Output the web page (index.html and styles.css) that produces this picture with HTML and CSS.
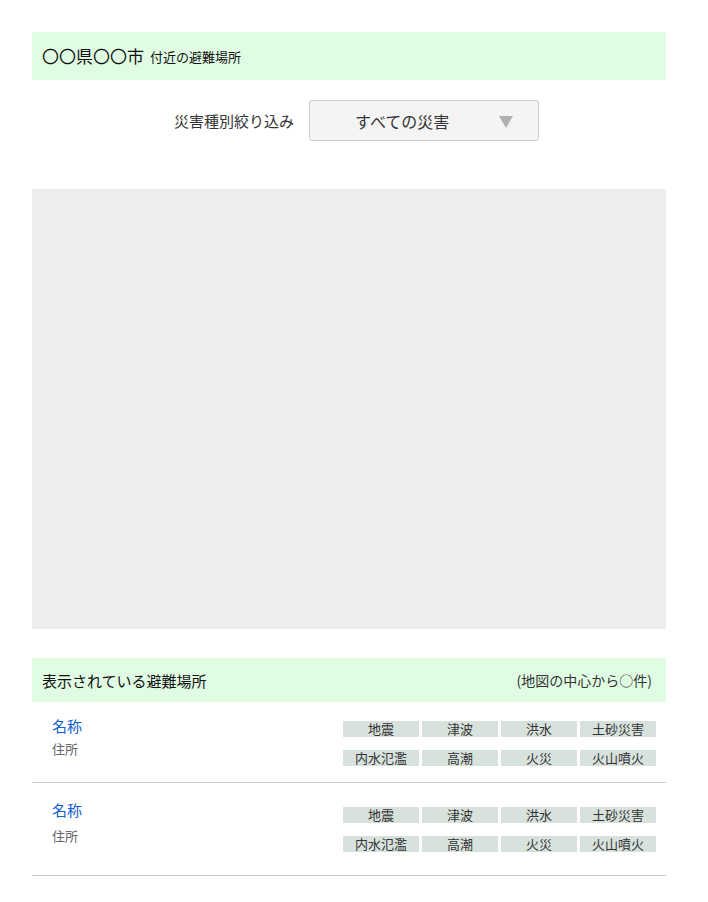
FILE: index.html
```html
<!DOCTYPE html>
<html lang="ja">
<head>
<meta charset="utf-8">
<title>避難場所</title>
<link rel="stylesheet" href="styles.css">
</head>
<body>
<div class="page">
  <div class="title-bar">
    <span class="title-main">〇〇県〇〇市</span>
    <span class="title-sub">付近の避難場所</span>
  </div>

  <div class="filter">
    <span class="filter-label">災害種別絞り込み</span>
    <div class="select">
      <span class="select-text">すべての災害</span>
      <svg class="select-arrow" width="14" height="12" viewBox="0 0 14 12"><polygon points="0,0 14,0 7,12" fill="#b0b0b0"/></svg>
    </div>
  </div>

  <div class="map"></div>

  <div class="list-header">
    <span class="list-title">表示されている避難場所</span>
    <span class="list-count">(地図の中心から○件)</span>
  </div>

  <div class="item item-first">
    <div class="item-info">
      <div class="item-name">名称</div>
      <div class="item-addr">住所</div>
    </div>
    <div class="tags">
      <span class="tag">地震</span><span class="tag">津波</span><span class="tag">洪水</span><span class="tag">土砂災害</span>
      <span class="tag">内水氾濫</span><span class="tag">高潮</span><span class="tag">火災</span><span class="tag">火山噴火</span>
    </div>
  </div>

  <div class="item item-second">
    <div class="item-info">
      <div class="item-name">名称</div>
      <div class="item-addr">住所</div>
    </div>
    <div class="tags">
      <span class="tag">地震</span><span class="tag">津波</span><span class="tag">洪水</span><span class="tag">土砂災害</span>
      <span class="tag">内水氾濫</span><span class="tag">高潮</span><span class="tag">火災</span><span class="tag">火山噴火</span>
    </div>
  </div>
</div>
</body>
</html>
```

FILE: styles.css
```css
html, body {
  margin: 0;
  padding: 0;
  background: #ffffff;
}
body {
  font-family: "Noto Sans CJK JP", "Noto Sans", sans-serif;
  color: #333333;
}
.page {
  margin: 32px 42px 0 32px;
  width: 634px;
}
.title-bar {
  height: 48px;
  background: #e0fde4;
  display: flex;
  align-items: center;
  padding-left: 10px;
  gap: 6px;
}
.title-main {
  font-size: 17px;
  color: #111111;
  line-height: 20px;
}
.title-sub {
  font-size: 13px;
  color: #111111;
  line-height: 20px;
  padding-top: 1px;
}
.filter {
  margin-top: 20px;
  display: flex;
  justify-content: center;
  align-items: center;
  gap: 15px;
  padding-left: 15px;
}
.filter-label {
  font-size: 15px;
  color: #333333;
}
.select {
  box-sizing: border-box;
  width: 230px;
  height: 41px;
  border: 1px solid #cccccc;
  border-radius: 3px;
  background: #f4f4f4;
  display: flex;
  align-items: center;
  padding-left: 45px;
  padding-right: 25px;
}
.select-text {
  font-size: 16px;
  color: #333333;
}
.select-arrow {
  margin-left: auto;
  margin-top: 2px;
}
.map {
  margin-top: 48px;
  height: 440px;
  background: #eeeeee;
}
.list-header {
  margin-top: 29px;
  height: 44px;
  background: #e0fde4;
  display: flex;
  align-items: center;
  justify-content: space-between;
  padding: 0 14px 0 10px;
}
.list-title {
  font-size: 15px;
  color: #111111;
}
.list-count {
  font-size: 14px;
  color: #333333;
}
.item {
  display: flex;
  justify-content: space-between;
  align-items: flex-start;
  border-bottom: 1px solid #cccccc;
  padding: 0 10px 0 20px;
}
.item-first {
  height: 80px;
}
.item-first .item-info {
  margin-top: 14px;
}
.item-first .tags {
  margin-top: 19px;
}
.item-second {
  height: 92px;
}
.item-second .item-info {
  margin-top: 17px;
}
.item-second .tags {
  margin-top: 24px;
}
.item-name {
  font-size: 15px;
  line-height: 20px;
  color: #1160d0;
}
.item-addr {
  font-size: 13px;
  line-height: 20px;
  color: #666666;
  margin-top: 3px;
}
.item-second .item-addr {
  margin-top: 6px;
}
.tags {
  display: grid;
  grid-template-columns: repeat(4, 76px);
  column-gap: 3px;
  row-gap: 13px;
}
.tag {
  height: 16px;
  line-height: 16px;
  font-size: 13px;
  text-align: center;
  background: #d8e2dd;
  color: #333333;
}
```
